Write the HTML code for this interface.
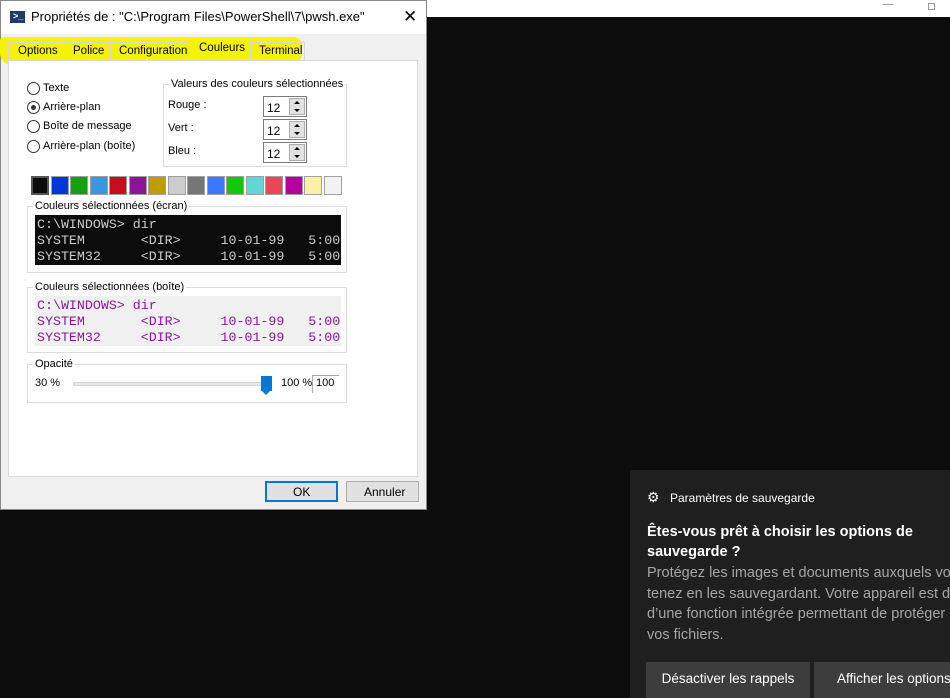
<!DOCTYPE html>
<html><head><meta charset="utf-8"><style>
*{margin:0;padding:0;box-sizing:border-box}
body{width:950px;height:698px;overflow:hidden;background:#0c0c0c;position:relative;font-family:"Liberation Sans",sans-serif;font-size:11px;color:#000}
.a{position:absolute}
.t{position:absolute;white-space:nowrap;line-height:1}
.mono{font-family:"Liberation Mono","DejaVu Sans Mono",monospace;font-size:13.3px;white-space:pre;position:absolute;line-height:1}
.grp{position:absolute;border:1px solid #dcdcdc}
.leg{position:absolute;background:#fff;padding:0 2px;line-height:1;top:-6px;left:5px;white-space:nowrap}
.radio{position:absolute;width:13px;height:13px;border:1px solid #333;border-radius:50%;background:#fff}
.inp{position:absolute;width:44px;height:21px;border:1px solid #7a7a7a;background:#fff}
.inp span{position:absolute;left:3px;top:4px;font-size:12px}
.spin{position:absolute;right:1px;top:1px;width:16px;height:17px;background:#e1e1e1;border:1px solid #adadad}
.spin:before{content:"";position:absolute;left:4px;top:2px;border-left:3px solid transparent;border-right:3px solid transparent;border-bottom:3px solid #000}
.spin:after{content:"";position:absolute;left:4px;top:10px;border-left:3px solid transparent;border-right:3px solid transparent;border-top:3px solid #000}
.sw{position:absolute;top:176px;width:18px;height:19px;border:1px solid #a0a0a0}
</style></head><body>
<div class="a" style="left:427px;top:0;width:523px;height:17px;background:#fff"></div>
<div class="a" style="left:883px;top:4px;width:10px;height:1px;background:#999"></div>
<div class="a" style="left:928px;top:3px;width:7px;height:7px;border:1px solid #999"></div>

<div class="a" style="left:0;top:0;width:427px;height:510px;background:#f0f0f0;border:1px solid #888"></div>
<div class="a" style="left:1px;top:1px;width:425px;height:33px;background:#fff"></div>
<div class="a" style="left:10px;top:11px;width:15px;height:12px;background:#1f3a6e"></div>
<div class="t" style="left:13px;top:12px;color:#fff;font-size:9px;font-weight:bold">&gt;_</div>
<div class="t" style="left:31px;top:10px;font-size:13px">Propriétés de : "C:\Program Files\PowerShell\7\pwsh.exe"</div>
<div class="t" style="left:403px;top:8px;font-size:17px">✕</div>

<div class="a" style="left:0;top:37px;width:302px;height:28px;background:#f4f400;border-radius:4px 8px 12px 12px"></div>
<div class="a" style="left:8px;top:42px;width:297px;height:19px;border:1px solid #d9d9d9;border-bottom:none"></div>
<div class="a" style="left:63px;top:42px;width:1px;height:18px;background:#d9d9d9"></div>
<div class="a" style="left:110px;top:42px;width:1px;height:18px;background:#d9d9d9"></div>
<div class="a" style="left:189px;top:39px;width:62px;height:22px;background:#f4f400;border:1px solid #d9d9d9;border-bottom:none"></div>
<div class="t" style="left:18px;top:46px;font-size:11.5px">Options</div>
<div class="t" style="left:73px;top:46px;font-size:11.5px">Police</div>
<div class="t" style="left:119px;top:46px;font-size:11.5px">Configuration</div>
<div class="t" style="left:199px;top:43px;font-size:11.5px">Couleurs</div>
<div class="t" style="left:259px;top:46px;font-size:11.5px">Terminal</div>

<div class="a" style="left:8px;top:60px;width:410px;height:417px;background:#fff;border:1px solid #d9d9d9"></div>

<div class="radio" style="left:27px;top:82px"></div><div class="t" style="left:43px;top:83px">Texte</div>
<div class="radio" style="left:27px;top:101px"></div><div class="a" style="left:31px;top:105px;width:5px;height:5px;border-radius:50%;background:#333"></div><div class="t" style="left:43px;top:102px">Arrière-plan</div>
<div class="radio" style="left:27px;top:120px"></div><div class="t" style="left:43px;top:121px">Boîte de message</div>
<div class="radio" style="left:27px;top:140px"></div><div class="t" style="left:43px;top:141px">Arrière-plan (boîte)</div>

<div class="grp" style="left:163px;top:84px;width:184px;height:83px"><div class="leg">Valeurs des couleurs sélectionnées</div></div>
<div class="t" style="left:168px;top:100px">Rouge :</div>
<div class="t" style="left:168px;top:123px">Vert :</div>
<div class="t" style="left:168px;top:146px">Bleu :</div>
<div class="inp" style="left:263px;top:96px"><span>12</span><div class="spin"></div></div>
<div class="inp" style="left:263px;top:119px"><span>12</span><div class="spin"></div></div>
<div class="inp" style="left:263px;top:142px"><span>12</span><div class="spin"></div></div>

<div class="sw" style="left:31px;background:#0c0c0c;border:2px solid #555"></div>
<div class="sw" style="left:51px;background:#0037da"></div>
<div class="sw" style="left:70px;background:#13a10e"></div>
<div class="sw" style="left:90px;background:#3a96dd"></div>
<div class="sw" style="left:109px;background:#c50f1f"></div>
<div class="sw" style="left:129px;background:#881798"></div>
<div class="sw" style="left:148px;background:#c19c00"></div>
<div class="sw" style="left:168px;background:#cccccc"></div>
<div class="sw" style="left:187px;background:#767676"></div>
<div class="sw" style="left:207px;background:#3b78ff"></div>
<div class="sw" style="left:226px;background:#16c60c"></div>
<div class="sw" style="left:246px;background:#61d6d6"></div>
<div class="sw" style="left:265px;background:#e74856"></div>
<div class="sw" style="left:285px;background:#b4009e"></div>
<div class="sw" style="left:304px;background:#f9f1a5"></div>
<div class="sw" style="left:324px;background:#f2f2f2"></div>

<div class="grp" style="left:27px;top:206px;width:320px;height:67px"><div class="leg">Couleurs sélectionnées (écran)</div></div>
<div class="a" style="left:35px;top:215px;width:306px;height:50px;background:#0c0c0c;overflow:hidden;color:#ccc">
<div class="mono" style="left:2px;top:3px">C:\WINDOWS&gt; dir</div>
<div class="mono" style="left:2px;top:19px">SYSTEM       &lt;DIR&gt;     10-01-99   5:00</div>
<div class="mono" style="left:2px;top:35px">SYSTEM32     &lt;DIR&gt;     10-01-99   5:00</div>
</div>

<div class="grp" style="left:27px;top:287px;width:320px;height:66px"><div class="leg">Couleurs sélectionnées (boîte)</div></div>
<div class="a" style="left:35px;top:296px;width:306px;height:50px;background:#f0f0f0;overflow:hidden;color:#881798">
<div class="mono" style="left:2px;top:3px">C:\WINDOWS&gt; dir</div>
<div class="mono" style="left:2px;top:19px">SYSTEM       &lt;DIR&gt;     10-01-99   5:00</div>
<div class="mono" style="left:2px;top:35px">SYSTEM32     &lt;DIR&gt;     10-01-99   5:00</div>
</div>

<div class="grp" style="left:27px;top:364px;width:320px;height:39px"><div class="leg">Opacité</div></div>
<div class="t" style="left:35px;top:378px">30 %</div>
<div class="a" style="left:73px;top:382px;width:192px;height:4px;background:#e7e7e7;border:1px solid #d6d6d6"></div>
<div class="a" style="left:261px;top:376px;width:11px;height:15px;background:#0078d7"></div>
<div class="a" style="left:261px;top:390px;width:0;height:0;border-left:5.5px solid transparent;border-right:5.5px solid transparent;border-top:5px solid #0078d7"></div>
<div class="t" style="left:281px;top:378px">100 %</div>
<div class="a" style="left:312px;top:375px;width:27px;height:18px;border:1px solid #aaa;border-right:none;border-bottom:none"></div>
<div class="t" style="left:316px;top:378px">100</div>

<div class="a" style="left:265px;top:481px;width:73px;height:21px;background:#e1e1e1;border:2px solid #0078d7"></div>
<div class="t" style="left:293px;top:486px;font-size:12px">OK</div>
<div class="a" style="left:346px;top:481px;width:73px;height:21px;background:#e1e1e1;border:1px solid #adadad"></div>
<div class="t" style="left:364px;top:486px;font-size:12px">Annuler</div>

<div class="a" style="left:630px;top:470px;width:320px;height:228px;background:#1f1f1f;font-family:'Liberation Sans',sans-serif">
<div class="t" style="left:17px;top:20px;color:#fff;font-size:14px">⚙</div>
<div class="t" style="left:40px;top:22px;color:#fff;font-size:12px">Paramètres de sauvegarde</div>
<div class="a" style="left:17px;top:52px;color:#fff;font-size:14.5px;font-weight:bold;line-height:20px;width:300px;white-space:nowrap">Êtes-vous prêt à choisir les options de<br>sauvegarde ?</div>
<div class="a" style="left:17px;top:93px;color:#a6a6a6;font-size:14.5px;line-height:20.5px;white-space:nowrap">Protégez les images et documents auxquels vous<br>tenez en les sauvegardant. Votre appareil est doté<br>d’une fonction intégrée permettant de protéger<br>vos fichiers.</div>
<div class="a" style="left:16px;top:192px;width:164px;height:36px;background:#3d3d3d;color:#fff;font-size:13.5px;text-align:center;line-height:33px">Désactiver les rappels</div>
<div class="a" style="left:184px;top:192px;width:140px;height:36px;background:#3d3d3d;color:#fff;font-size:13.5px;line-height:33px;padding-left:23px;white-space:nowrap;overflow:hidden">Afficher les options</div>
</div>
</body></html>
